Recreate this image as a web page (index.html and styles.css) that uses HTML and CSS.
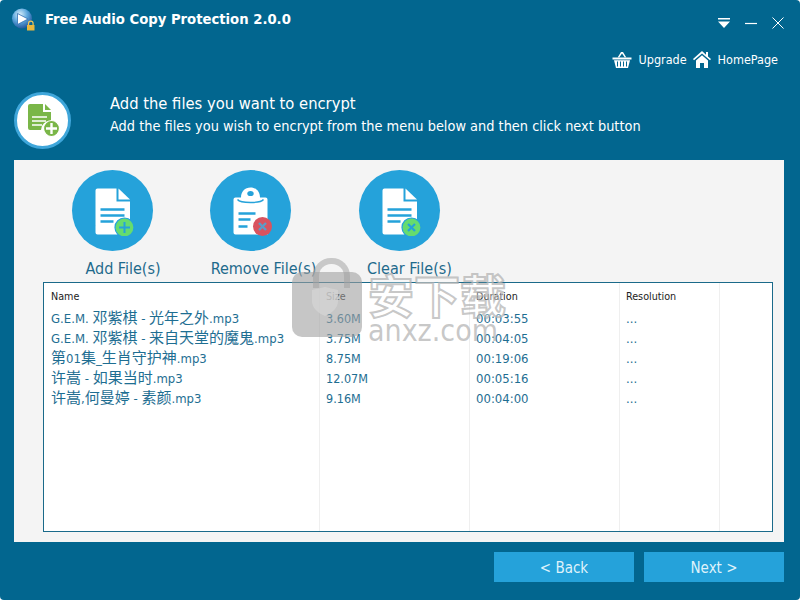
FILE: index.html
```html
<!DOCTYPE html>
<html lang="en">
<head>
<meta charset="utf-8">
<title>Free Audio Copy Protection 2.0.0</title>
<link rel="stylesheet" href="styles.css">
</head>
<body>
<div class="window">
  <header class="titlebar">
    <svg class="app-logo" width="30" height="30" viewBox="0 0 30 30">
      <defs>
        <radialGradient id="orb" cx="40%" cy="30%" r="75%"><stop offset="0" stop-color="#d8eefa"/><stop offset="0.5" stop-color="#5aa6dc"/><stop offset="1" stop-color="#1d4f96"/></radialGradient>
      </defs>
      <circle cx="16" cy="14.500" r="10" fill="url(#orb)"/>
      <path d="M11.500 9.500 22 15l-10.500 5.500z" fill="#fff" stroke="#2f6fb4" stroke-width="0.800"/>
      <path d="M22.500 21v-1.500a2.300 2.300 0 0 1 4.600 0V21" fill="none" stroke="#e9c65a" stroke-width="1.200"/>
      <rect x="21" y="21" width="7.500" height="5.500" fill="#e8b83e"/>
    </svg>
    <h1 class="app-title">Free Audio Copy Protection 2.0.0</h1>
    <div class="win-controls">
      <svg width="14" height="12" viewBox="0 0 14 12"><path d="M1 1h12v1.400H1zM1 4.500h12L7 11z" fill="#fff"/></svg>
      <svg width="14" height="12" viewBox="0 0 14 12"><path d="M1 6.500h12" stroke="#fff" stroke-width="1.200"/></svg>
      <svg width="14" height="14" viewBox="0 0 14 14"><path d="M1.500 1.500l11 11M12.500 1.500l-11 11" stroke="#fff" stroke-width="1"/></svg>
    </div>
  </header>

  <nav class="toplinks">
    <a class="toplink">
      <svg width="20" height="17" viewBox="0 0 20 17"><path d="M5.800 6.300 9 1h2l3.200 5.300-1.400.3L10 2.600 7.200 6.600z" fill="#fff"/><path d="M0.500 6.500h19V8.500h-19z" fill="#fff"/><path d="M2 9.300h16l-2 7.700H4zM5 10.500v5h1v-5zm3 0v5h1v-5zm3 0v5h1v-5zm3 0v5h1v-5z" fill="#fff" fill-rule="evenodd"/></svg>
      <span>Upgrade</span>
    </a>
    <a class="toplink">
      <svg width="18" height="17" viewBox="0 0 18 17"><path d="M9 0 0 8l1 1.200L9 2.400l8 6.800L18 8l-3-2.600V1h-2v2.700z" fill="#fff"/><path d="M3 9.500 9 4.200l6 5.300V17h-4v-5H7v5H3z" fill="#fff"/></svg>
      <span>HomePage</span>
    </a>
  </nav>

  <section class="intro">
    <div class="intro-badge">
      <svg width="36" height="34" viewBox="0 0 36 34">
        <path d="M5 0h13v8h8v9a9 9 0 0 0-10 9H5a2 2 0 0 1-2-2V2a2 2 0 0 1 2-2z" fill="#7ab648"/>
        <path d="M20 0l6 6h-6z" fill="#7ab648"/>
        <path d="M7 13h15M7 17h14M7 21h10" stroke="#fff" stroke-width="1.600"/>
        <circle cx="26.500" cy="24.500" r="8" fill="#7ab648" stroke="#fff" stroke-width="1.200"/>
        <path d="M26.500 19v11M21 24.500h11" stroke="#fff" stroke-width="2.400"/>
      </svg>
    </div>
    <div class="intro-text">
      <h2 class="intro-title">Add the files you want to encrypt</h2>
      <p class="intro-sub">Add the files you wish to encrypt from the menu below and then click next button</p>
    </div>
  </section>

  <main class="panel">
    <div class="tools">
      <div class="tool tool-add">
        <div class="tool-circle">
          <svg width="58" height="50" viewBox="0 0 58 50">
            <path d="M13.500 2.500h19v13h13.500v26H13.500a2 2 0 0 1-2-2V4.500a2 2 0 0 1 2-2zM11.500 40h34v8.500h-32a2 2 0 0 1-2-2z" fill="#fff"/>
            <path d="M34.500 2.500 46 13.500H34.500z" fill="#fff"/>
            <path d="M16.500 23.500h24M16.500 29.500h24M16.500 35.500h13" stroke="#25a2da" stroke-width="2.400"/>
            <circle cx="40.500" cy="41.500" r="9.500" fill="#66dc6e" stroke="#25a2da" stroke-width="1.200"/>
            <path d="M40.500 36v11M35 41.500h11" stroke="#25a2da" stroke-width="2"/>
          </svg>
        </div>
        <span class="tool-label label-add">Add File(s)</span>
      </div>
      <div class="tool tool-remove">
        <div class="tool-circle">
          <svg width="58" height="50" viewBox="0 0 58 50">
            <path d="M19 11.500c0-6 4-10 9.500-10S38 5.500 38 11.500h5.500a2 2 0 0 1 2 2V48.500h-32a2 2 0 0 1-2-2V13.500a2 2 0 0 1 2-2z" fill="#fff"/>
            <ellipse cx="28.500" cy="7.500" rx="3.200" ry="2.600" fill="#25a2da"/>
            <path d="M15.500 13.500c3 4 23 4 26 0" fill="none" stroke="#25a2da" stroke-width="1.400"/>
            <path d="M16.500 27.500h17M16.500 33.500h12M16.500 40.500h9" stroke="#25a2da" stroke-width="2.400"/>
            <circle cx="40.500" cy="40.500" r="9.500" fill="#d9535f"/>
            <path d="M37 37l7 7M44 37l-7 7" stroke="#5d9cc8" stroke-width="2.400"/>
          </svg>
        </div>
        <span class="tool-label label-remove">Remove File(s)</span>
      </div>
      <div class="tool tool-clear">
        <div class="tool-circle">
          <svg width="58" height="50" viewBox="0 0 58 50">
            <path d="M13.500 2.500h19v13h13.500v26H13.500a2 2 0 0 1-2-2V4.500a2 2 0 0 1 2-2zM11.500 40h34v8.500h-32a2 2 0 0 1-2-2z" fill="#fff"/>
            <path d="M34.500 2.500 46 13.500H34.500z" fill="#fff"/>
            <path d="M16.500 23.500h24M16.500 29.500h24M16.500 35.500h13" stroke="#25a2da" stroke-width="2.400"/>
            <circle cx="40.500" cy="41.500" r="9.500" fill="#66dc6e" stroke="#25a2da" stroke-width="1.200"/>
            <path d="M37 38l7 7M44 38l-7 7" stroke="#25a2da" stroke-width="2.200"/>
          </svg>
        </div>
        <span class="tool-label label-clear">Clear File(s)</span>
      </div>
    </div>

    <div class="filelist">
      <div class="row head">
        <div class="cell c-name">Name</div><div class="cell c-size">Size</div><div class="cell c-dur">Duration</div><div class="cell c-res">Resolution</div>
      </div>
      <div class="row"><div class="cell c-name">G.E.M. <span class="cjk">邓紫棋</span> - <span class="cjk">光年之外</span>.mp3</div><div class="cell c-size">3.60M</div><div class="cell c-dur">00:03:55</div><div class="cell c-res">...</div></div>
      <div class="row"><div class="cell c-name">G.E.M. <span class="cjk">邓紫棋</span> - <span class="cjk">来自天堂的魔鬼</span>.mp3</div><div class="cell c-size">3.75M</div><div class="cell c-dur">00:04:05</div><div class="cell c-res">...</div></div>
      <div class="row"><div class="cell c-name"><span class="cjk">第</span>01<span class="cjk">集</span>_<span class="cjk">生肖守护神</span>.mp3</div><div class="cell c-size">8.75M</div><div class="cell c-dur">00:19:06</div><div class="cell c-res">...</div></div>
      <div class="row"><div class="cell c-name"><span class="cjk">许嵩</span> - <span class="cjk">如果当时</span>.mp3</div><div class="cell c-size">12.07M</div><div class="cell c-dur">00:05:16</div><div class="cell c-res">...</div></div>
      <div class="row"><div class="cell c-name"><span class="cjk">许嵩</span>,<span class="cjk">何曼婷</span> - <span class="cjk">素颜</span>.mp3</div><div class="cell c-size">9.16M</div><div class="cell c-dur">00:04:00</div><div class="cell c-res">...</div></div>
      <div class="col-lines"><i class="c-name"></i><i class="c-size"></i><i class="c-dur"></i><i class="c-res"></i></div>
    </div>
  </main>

  <footer class="actions">
    <button class="btn">&lt; Back</button>
    <button class="btn">Next &gt;</button>
  </footer>

  <div class="watermark" aria-hidden="true">
    <div class="wm-lock">
      <div class="wm-shackle"></div>
      <div class="wm-body"><svg width="26" height="29" viewBox="0 0 26 29"><path d="M0 3 13 0l13 3v11c0 7-6 12-13 15C6 26 0 21 0 14z" fill="#d6d6d6" opacity="0.700"/></svg></div>
    </div>
    <div class="wm-text">
      <div class="wm-cn">安下载</div>
      <div class="wm-en">anxz.com</div>
    </div>
  </div>
</div>
</body>
</html>
```
FILE: styles.css
```css
* { box-sizing: border-box; }
html, body { margin: 0; padding: 0; background: #fff; }
.window {
  position: relative;
  width: 800px;
  height: 600px;
  background: #02668f;
  border-radius: 4px;
  overflow: hidden;
  display: flex;
  flex-direction: column;
  font-family: "DejaVu Sans", "Noto Sans CJK SC", sans-serif;
  font-stretch: condensed;
  color: #fff;
}
.titlebar { height: 42px; display: flex; align-items: flex-start; padding: 4px 15px 0 6px; }
.app-logo { flex: none; }
.app-title { margin: 5px 0 0 9px; font-size: 14.700px; line-height: 20px; font-weight: 700; flex: 1; white-space: nowrap; }
.win-controls { display: flex; gap: 13px; margin-top: 12px; align-items: center; }
.toplinks { height: 28px; display: flex; justify-content: flex-end; gap: 6px; padding: 7px 22px 0 0; font-size: 12.500px; }
.toplink { display: flex; align-items: center; gap: 7px; height: 20px; }
.intro { height: 88px; padding: 22px 0 0 14px; display: flex; }
.intro-badge {
  width: 57px; height: 57px; border-radius: 50%;
  background: #fff; border: 3px solid #3fa6da;
  display: flex; align-items: center; justify-content: center;
  flex: none;
}
.intro-text { margin-left: 39px; margin-top: 2px; }
.intro-title { margin: 0; font-size: 16.400px; font-weight: 400; line-height: 20px; }
.intro-sub { margin: 2px 0 0; font-size: 14.400px; line-height: 20px; white-space: nowrap; }
.panel { margin: 2px 16px 0 14px; height: 382px; background: #f4f4f4; padding: 10px 11px 10px 29px; display: flex; flex-direction: column; flex: none; }
.tools { display: flex; height: 112px; flex: none; }
.tool { display: flex; flex-direction: column; align-items: center; color: #1e6a8c; white-space: nowrap; }
.tool-add { width: 81px; margin-left: 29px; }
.tool-remove { width: 81px; margin-left: 57px; }
.tool-clear { width: 81px; margin-left: 68px; }
.tool-circle { width: 81px; height: 81px; border-radius: 50%; background: #25a2da; display: flex; align-items: center; justify-content: center; flex: none; }
.tool-label { font-size: 16px; line-height: 20px; margin-top: 8px; }
.label-add { margin-left: 21px; }
.label-remove { margin-left: 26px; }
.label-clear { margin-left: 20px; }
.filelist { position: relative; flex: 1; background: #fff; border: 1px solid #1a6a8a; padding-top: 4px; font-size: 13px; }
.row { display: flex; height: 20px; line-height: 20px; color: #1e6e92; }
.row.head { height: 22px; font-size: 10.700px; color: #222; }
.cell { padding-left: 7px; white-space: nowrap; flex: none; }
.cjk { font-family: "Noto Sans CJK SC", sans-serif; font-size: 15px; line-height: 0; color: #1e6e92; }
.c-name { width: 275px; }
.c-size, .c-dur { width: 150px; }
.c-res { width: 100px; }
.row:not(.head) .c-size { font-size: 12.500px; }
.col-lines { position: absolute; inset: 0 0 0 1px; display: flex; pointer-events: none; }
.col-lines i { display: block; border-right: 1px solid #efefef; flex: none; }
.actions { flex: 1; display: flex; justify-content: flex-end; gap: 10px; padding: 10px 16px 0 0; }
.btn { width: 140px; height: 30px; border: 0; background: #25a2da; color: #dff2fb; font: inherit; font-stretch: condensed; font-size: 15px; padding: 2px 0 0; }
.watermark { position: absolute; left: 292px; top: 258px; display: flex; gap: 6px; pointer-events: none; }
.wm-lock { position: relative; width: 70px; height: 80px; }
.wm-shackle { position: absolute; left: 21px; top: 0; width: 37px; height: 30px; border: 6px solid rgba(170,170,170,.6); border-radius: 18px 18px 0 0; border-bottom: 0; }
.wm-body { position: absolute; left: 0; top: 14px; width: 70px; height: 65px; background: rgba(160,160,160,.6); border-radius: 10px; padding: 15px 0 0 20px; }
.wm-text { margin-top: 10px; width: 145px; }
.wm-cn { font-family: "Noto Sans CJK SC", sans-serif; font-size: 46px; line-height: 50px; font-weight: 700; color: rgba(255,255,255,.35); -webkit-text-stroke: 2px rgba(175,175,175,.7); white-space: nowrap; }
.wm-en { font-family: "DejaVu Sans", sans-serif; font-size: 30px; line-height: 26px; color: rgba(175,175,175,.7); }
```
